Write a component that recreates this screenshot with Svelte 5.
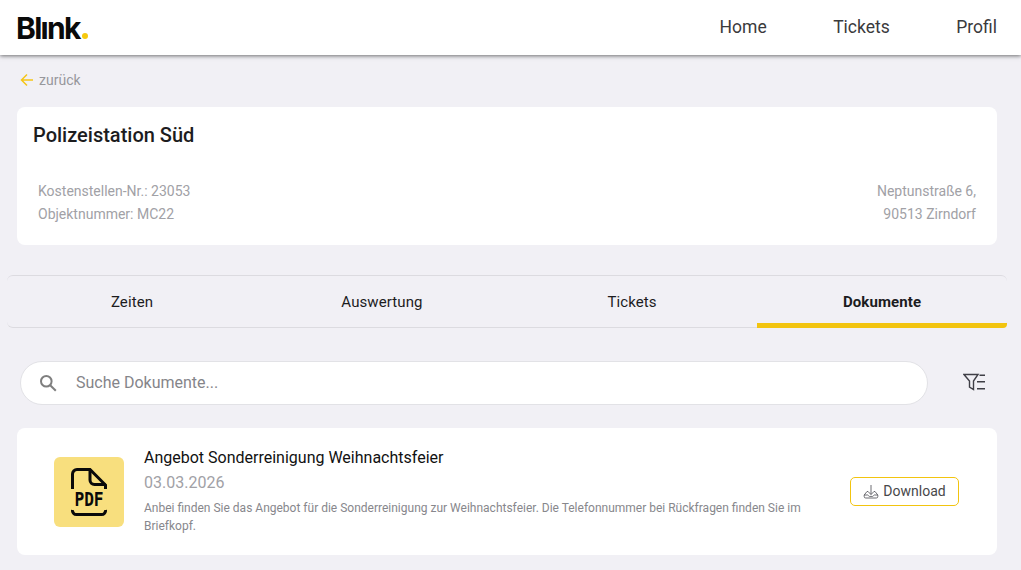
<script lang="ts">
  const nav = ['Home', 'Tickets', 'Profil'];
  const tabs = ['Zeiten', 'Auswertung', 'Tickets', 'Dokumente'];
  let activeTab = 'Dokumente';
</script>

<header class="topbar">
  <div class="logo">Blınk<span class="dot"></span></div>
  <nav class="nav">
    {#each nav as item}
      <span>{item}</span>
    {/each}
  </nav>
</header>

<main class="page">
  <div class="back">
    <svg viewBox="0 0 14 14" width="14" height="14" fill="none" stroke="#f5c518" stroke-width="1.5"><path d="M13 7H1.500M7 1.500 1.500 7 7 12.500"/></svg>
    <span>zurück</span>
  </div>

  <section class="card object">
    <h1>Polizeistation Süd</h1>
    <div class="meta">
      <div>
        <p>Kostenstellen-Nr.: 23053</p>
        <p>Objektnummer: MC22</p>
      </div>
      <div class="address">
        <p>Neptunstraße 6,</p>
        <p>90513 Zirndorf</p>
      </div>
    </div>
  </section>

  <div class="tabs">
    {#each tabs as tab}
      <button class="tab" class:active={activeTab === tab} onclick={() => (activeTab = tab)}>{tab}</button>
    {/each}
  </div>

  <div class="search-row">
    <div class="search">
      <svg viewBox="0 0 18 18" width="18" height="18" fill="none" stroke="#7f7f7f" stroke-width="2"><circle cx="7.300" cy="7.300" r="5.300"/><path d="m11.200 11.200 5.600 5.600"/></svg>
      <span>Suche Dokumente...</span>
    </div>
    <svg class="filter" viewBox="0 0 23 18" width="23" height="18" fill="none" stroke="#3f3f46" stroke-width="1.4"><path d="M1 1.500h14L10.500 8v8.500L6.500 14V8zM16.500 2.300H22M14 8.700h8M14 15.700h8"/></svg>
  </div>

  <article class="card doc">
    <div class="pdf">
      <svg viewBox="0 0 36 48" width="36" height="48" fill="none" stroke="#0a0a0a" stroke-width="3">
        <path d="M1.500 21V6a4.500 4.500 0 0 1 4.500-4.500H19l15.500 15.500V21"/>
        <path d="M19 1.500V12a4.500 4.500 0 0 0 4.500 4.500h11"/>
        <path d="M1.500 42a4 4 0 0 0 4 4.500h25a4 4 0 0 0 4-4.500"/>
      </svg>
      <span class="pdf-label">PDF</span>
    </div>
    <div class="doc-body">
      <h2>Angebot Sonderreinigung Weihnachtsfeier</h2>
      <div class="date">03.03.2026</div>
      <p>Anbei finden Sie das Angebot für die Sonderreinigung zur Weihnachtsfeier. Die Telefonnummer bei Rückfragen finden Sie im Briefkopf.</p>
    </div>
    <button class="download">
      <svg viewBox="0 0 16 15" width="16" height="15" fill="none" stroke="#5c5c62" stroke-width="0.900"><path d="M8 1v9.500M4.800 7.300 8 10.500l3.200-3.200M5 7.500H4L1.200 11v1.500A1.500 1.500 0 0 0 2.700 14h10.600a1.500 1.500 0 0 0 1.500-1.500V11L12 7.500h-1M1.200 11h3.600c.6 0 .8 1.400 1.600 1.400h3.200c.8 0 1-1.400 1.600-1.400h3.600"/></svg>
      <span>Download</span>
    </button>
  </article>
</main>

<style>
  :global(body) {
    background: #f1f0f5;
    font-family: Roboto, "Liberation Sans", sans-serif;
    height: 570px;
    overflow: hidden;
  }

  .topbar {
    height: 55px;
    background: #fff;
    box-shadow: 0 1px 4px rgba(0, 0, 0, 0.55);
    display: flex;
    align-items: center;
    justify-content: space-between;
    padding: 0 24px 0 16px;
    position: relative;
  }

  .logo {
    font-family: Inter, sans-serif;
    font-weight: 700;
    font-size: 30px;
    letter-spacing: -1.700px;
    color: #0a0a0a;
    display: flex;
    align-items: baseline;
  }

  .dot {
    width: 6px;
    height: 6px;
    border-radius: 50%;
    background: #f6c90e;
    margin-left: 2px;
  }

  .nav {
    display: flex;
    gap: 66.500px;
    font-size: 17.500px;
    color: #3a3a3c;
    padding-bottom: 1px;
  }

  .page {
    padding: 0 24px 0 17px;
  }

  .back {
    height: 50px;
    margin-bottom: 2px;
    display: flex;
    align-items: center;
    gap: 5px;
    padding-left: 3px;
    font-size: 14px;
    color: #97979c;
  }

  .card {
    background: #fff;
    border-radius: 8px;
  }

  .object {
    height: 138px;
    padding: 16px 21px 0 16px;
    box-sizing: border-box;
  }

  h1 {
    margin: 0;
    font-size: 20px;
    font-weight: 500;
    line-height: 24px;
    color: #1c1c1e;
  }

  .meta {
    display: flex;
    justify-content: space-between;
    margin-top: 33px;
    padding-left: 5px;
    font-size: 14px;
    color: #a1a1a6;
  }

  .meta p {
    margin: 0;
    line-height: 23px;
  }

  .address {
    text-align: right;
  }

  .tabs {
    display: grid;
    grid-template-columns: repeat(4, 1fr);
    margin: 30px -10px 0 -10px;
    border-top: 1px solid #dcdbe0;
    border-bottom: 1px solid #dcdbe0;
    border-radius: 6px;
    height: 53px;
    box-sizing: border-box;
  }

  .tab {
    background: none;
    border: 0;
    padding: 4px 0 0;
    font: inherit;
    font-size: 15px;
    letter-spacing: 0.100px;
    color: #1c1c1e;
    border-bottom: 5px solid transparent;
    margin-bottom: -1px;
  }

  .tab.active {
    font-weight: 700;
    border-bottom-color: #f2c40f;
    border-radius: 0 0 4px 0;
  }

  .search-row {
    display: flex;
    align-items: center;
    margin-top: 33px;
    margin-left: 3px;
  }

  .search {
    width: 908px;
    height: 44px;
    box-sizing: border-box;
    background: #fff;
    border: 1px solid #e2e2e6;
    border-radius: 22px;
    display: flex;
    align-items: center;
    gap: 19px;
    padding: 0 0 1px 18px;
    font-size: 16px;
    color: #85858a;
  }

  .search svg {
    margin-top: 1px;
  }

  .filter {
    margin-left: 35px;
    margin-bottom: 2px;
  }

  .doc {
    height: 127px;
    margin-top: 23px;
    display: flex;
    align-items: center;
    padding: 0 38px 0 37px;
  }

  .pdf {
    width: 70px;
    height: 70px;
    flex: none;
    background: #f8df7e;
    border-radius: 6px;
    display: flex;
    align-items: center;
    justify-content: center;
    position: relative;
  }

  .pdf-label {
    position: absolute;
    left: 0;
    right: 0;
    top: 31px;
    text-align: center;
    font-family: "DejaVu Sans Mono", monospace;
    font-weight: 700;
    font-size: 19px;
    line-height: 22px;
    color: #0a0a0a;
    transform: scaleX(0.85);
  }

  .doc-body {
    width: 670px;
    margin-left: 20px;
  }

  h2 {
    margin: 0;
    font-size: 16px;
    font-weight: 400;
    line-height: 20px;
    color: #111;
  }

  .date {
    margin-top: 5px;
    font-size: 16px;
    line-height: 20px;
    color: #a1a1a6;
  }

  .doc-body p {
    margin: 6px 0 0;
    font-size: 12px;
    line-height: 18px;
    color: #87878c;
  }

  .download {
    margin-left: auto;
    width: 109px;
    height: 29px;
    background: #fff;
    border: 1px solid #f2c40f;
    border-radius: 5px;
    display: flex;
    align-items: center;
    justify-content: center;
    gap: 4px;
    font: inherit;
    font-size: 14px;
    color: #48484a;
    padding: 0 0 1px;
  }
</style>
